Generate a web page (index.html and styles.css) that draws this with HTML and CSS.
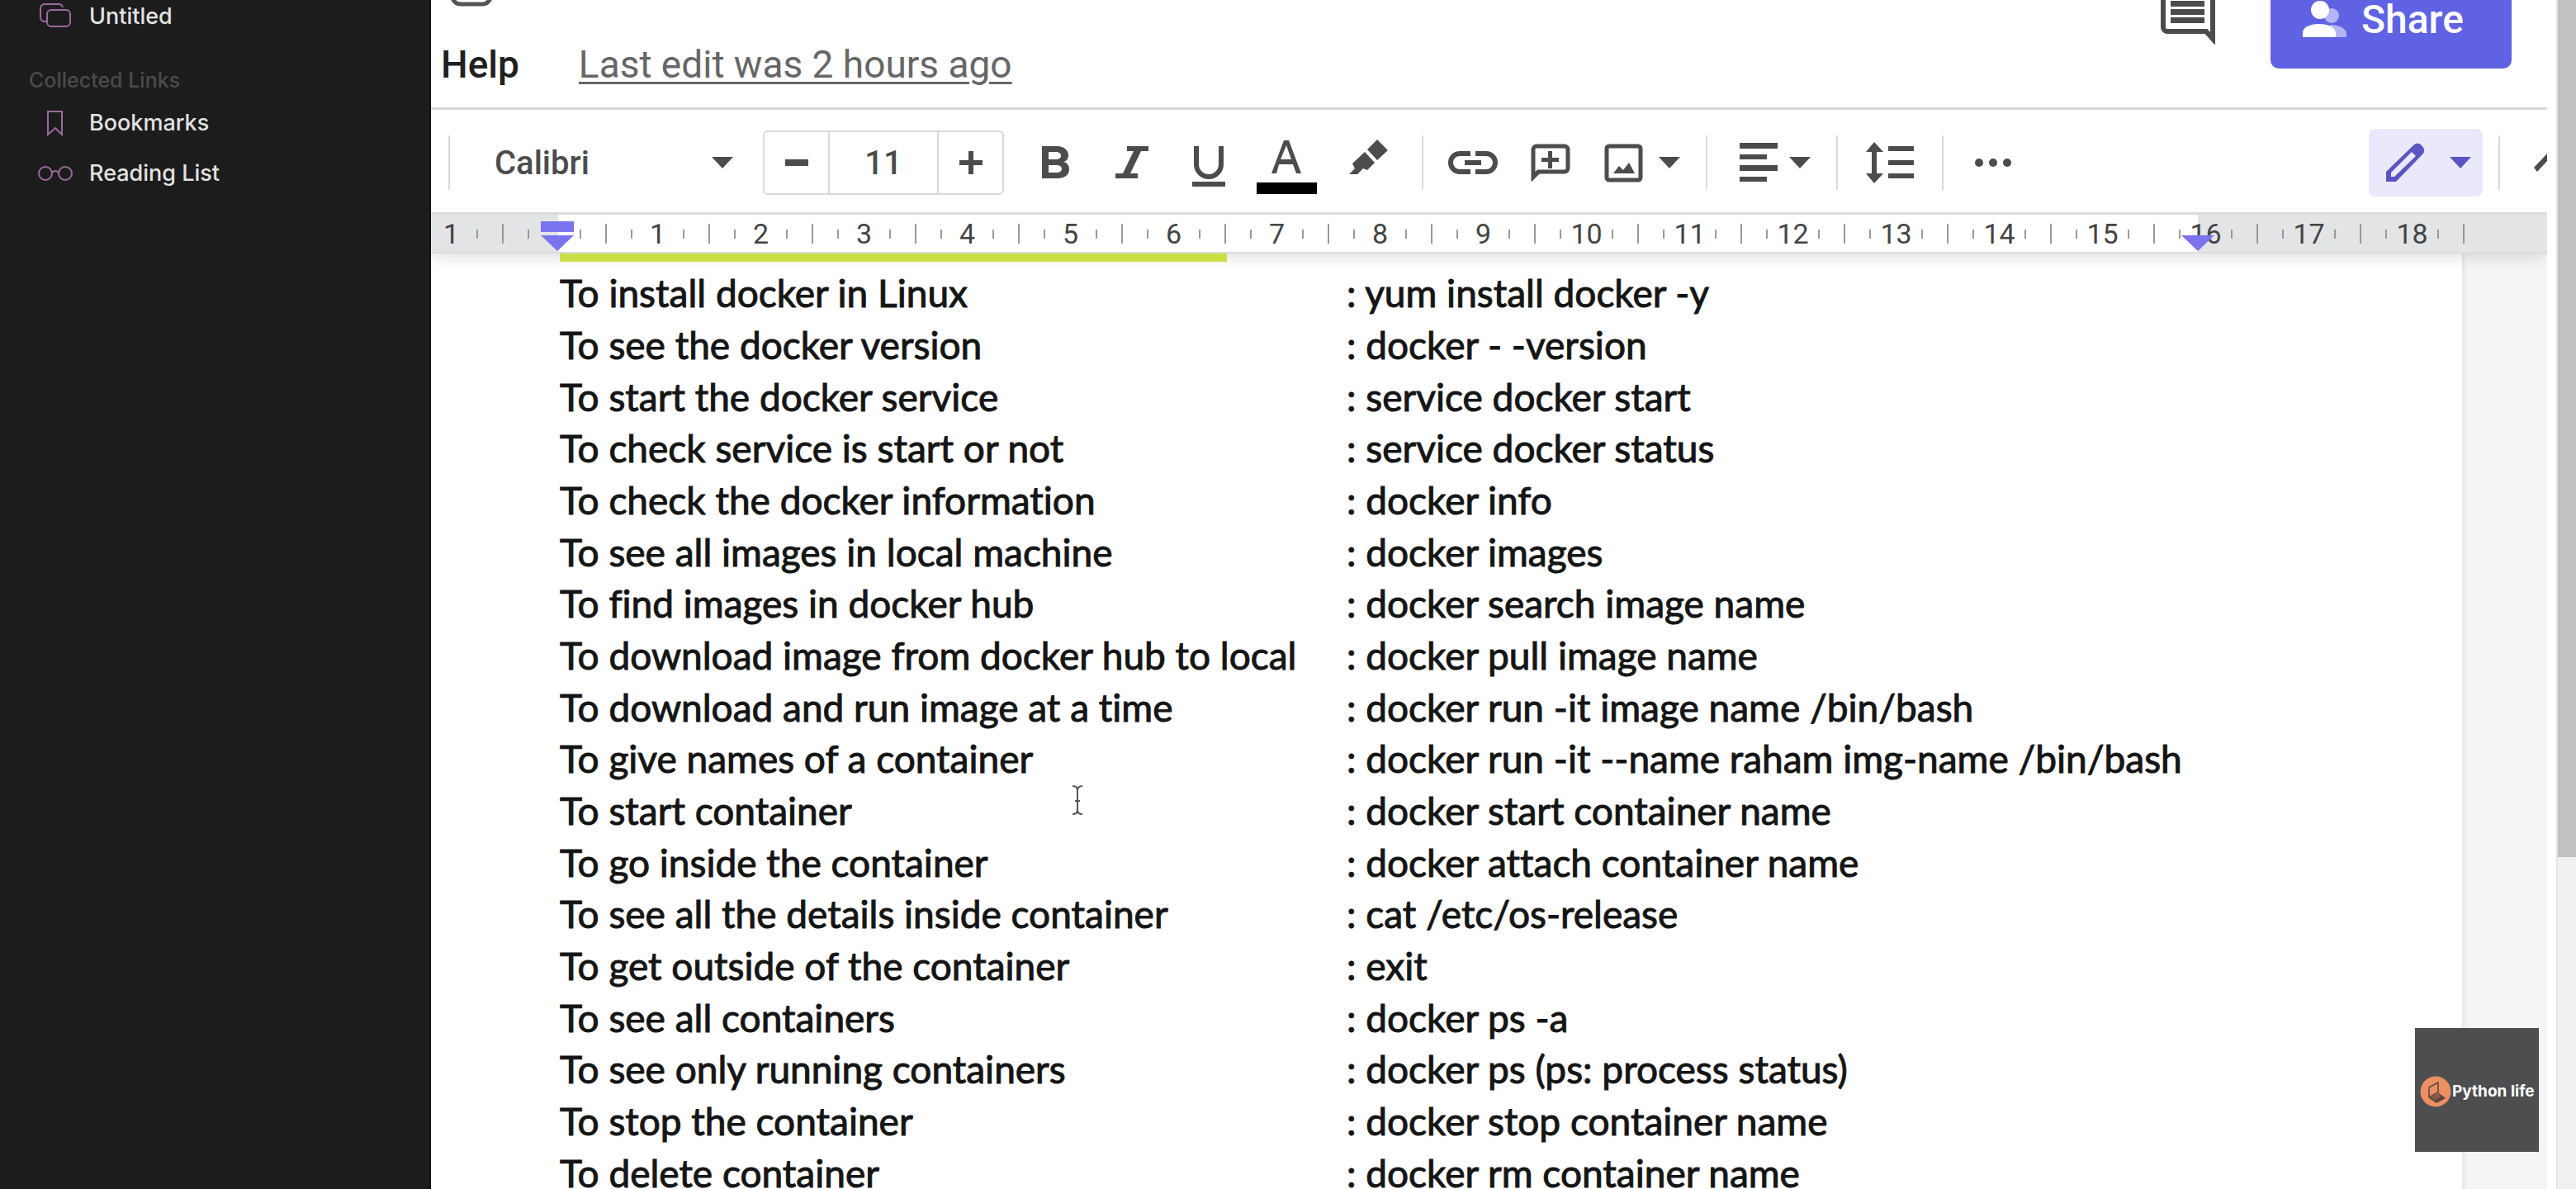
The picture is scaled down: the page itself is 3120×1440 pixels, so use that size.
FILE: index.html
```html
<!DOCTYPE html>
<html lang="en">
<head>
<meta charset="utf-8">
<title>Docker commands</title>
<link rel="stylesheet" href="styles.css">
</head>
<body>
<div class="app">
  <aside class="sidebar">
    <a class="side-link" href="#untitled">
      <svg class="side-icon" viewBox="0 0 44 36" aria-hidden="true"><path d="M11 25H9a5 5 0 0 1-5-5V9a5 5 0 0 1 5-5h17a5 5 0 0 1 5 4"/><rect x="12" y="11" width="28" height="20" rx="5"/></svg>
      Untitled
    </a>
    <h2 class="side-title">Collected Links</h2>
    <a class="side-link" href="#bookmarks">
      <svg class="side-icon" viewBox="0 0 44 36" aria-hidden="true"><path d="M13 4h17v28l-8-8-9 8z"/></svg>
      Bookmarks
    </a>
    <a class="side-link" href="#reading">
      <svg class="side-icon" viewBox="0 0 44 36" aria-hidden="true"><circle cx="10" cy="18" r="8"/><circle cx="34" cy="18" r="8"/><path d="M18 17q4-4 8 0"/></svg>
      Reading List
    </a>
  </aside>

  <main class="editor">
    <header class="header">
      <div class="header-left">
        <svg class="drive-icon" viewBox="0 0 54 8" aria-hidden="true"><path d="M3 -6Q5 5 14 5H40Q49 5 51 -6"/></svg>
        <nav class="menu">
          <button class="menu-item" type="button">Help</button>
          <a class="last-edit" href="#history">Last edit was 2 hours ago</a>
        </nav>
      </div>
      <div class="header-right">
        <button class="comments" type="button" aria-label="Comments">
          <svg width="68" height="54" viewBox="0 0 68 54" aria-hidden="true"><path d="M4-8V33a5 5 0 0 0 5 5H56l8 9V-8" fill="none" stroke="#4c4c4c" stroke-width="6"/><path d="M53 39h14v14z" fill="#4c4c4c"/><path d="M13 4.500h41M13 14.500h41M13 24.500h41" stroke="#4c4c4c" stroke-width="7"/></svg>
        </button>
        <button class="share" type="button">
          <svg width="56" height="46" viewBox="0 0 56 46" aria-hidden="true"><circle cx="36" cy="18" r="9" fill="#b4b5f4"/><path d="M34 29c12 0 20 5 20 11v4H34z" fill="#b4b5f4"/><circle cx="22" cy="11" r="11" fill="#fff"/><path d="M1 44v-5c0-7 9-11 20-11s20 4 20 11v5z" fill="#fff"/></svg>
          Share
        </button>
      </div>
    </header>

    <div class="toolbar">
      <span class="sep"></span>
      <div class="font-pick">
        <select class="font-select" aria-label="Font"><option>Calibri</option></select>
        <svg class="arrow" viewBox="0 0 26 14" aria-hidden="true"><path d="M0 0h26L13 14z"/></svg>
      </div>
      <div class="size-box">
        <button type="button" aria-label="Decrease font size"><svg width="28" height="28" viewBox="0 0 28 28" aria-hidden="true"><path d="M0 10h28v8H0z"/></svg></button>
        <input type="text" value="11" aria-label="Font size">
        <button type="button" aria-label="Increase font size"><svg width="28" height="28" viewBox="0 0 28 28" aria-hidden="true"><path d="M0 11h11V0h6v11h11v6H17v11h-6V17H0z"/></svg></button>
      </div>
      <div class="group styles">
        <button type="button" aria-label="Bold"><svg width="74" height="68" viewBox="0 0 74 68" aria-hidden="true"><path fill-rule="evenodd" d="M21 14H39C48 14 53 19 53 25C53 29 51 32 47 33C52 34 54 38 54 42C54 49 48 53 40 53H21zM29 21V30H38C46 30 46 21 38 21zM29 37V46H39C47 46 47 37 39 37z"/></svg></button>
        <button type="button" aria-label="Italic"><svg width="74" height="68" viewBox="0 0 74 68" aria-hidden="true"><path d="M31 14H57V20H48L35 47H44V53H17V47H26L39 20H31z"/></svg></button>
        <button type="button" aria-label="Underline"><svg width="74" height="68" viewBox="0 0 74 68" aria-hidden="true"><path d="M22 14V36a15 15 0 0 0 30 0V14" fill="none" stroke="#4c4c4c" stroke-width="6"/><path d="M17 57h40v6H17z"/></svg></button>
        <button type="button" aria-label="Text color"><svg width="96" height="80" viewBox="0 0 96 80" aria-hidden="true"><path fill-rule="evenodd" d="M45 13H51L66 53H60L56 42H39L36 53H30zM41 36H54L48 19z"/><path d="M12 64h73v14H12z" fill="#000"/></svg></button>
        <button type="button" aria-label="Highlight color"><svg width="74" height="68" viewBox="0 0 74 68" aria-hidden="true"><path d="M53 6L66 19L53 31L41 18zM38 21L50 34L41 43L36 41L29 48H19L26 41L23 35z"/></svg></button>
      </div>
      <span class="sep"></span>
      <div class="group insert">
        <button type="button" aria-label="Insert link"><svg width="60" height="28" viewBox="0 0 60 28" aria-hidden="true"><path d="M27 3H14a11 11 0 0 0 0 22H27M33 3H46a11 11 0 0 1 0 22H33M20 14H40" fill="none" stroke="#4c4c4c" stroke-width="6"/></svg></button>
        <button type="button" aria-label="Add comment"><svg width="48" height="46" viewBox="0 0 48 46" aria-hidden="true"><path d="M3 40V7a4 4 0 0 1 4-4H41a4 4 0 0 1 4 4V30a4 4 0 0 1-4 4H9z" fill="none" stroke="#4c4c4c" stroke-width="5"/><path d="M1 34h12L1 46zM21 9h5v8h8v5h-8v8h-5v-8h-8v-5h8z"/></svg></button>
        <button class="with-arrow" type="button" aria-label="Insert image"><svg width="48" height="48" viewBox="0 0 48 48" aria-hidden="true"><rect x="4" y="4" width="41" height="41" rx="3" fill="none" stroke="#4c4c4c" stroke-width="5"/><path d="M12 37l7-9 5 5 7-9 7 13z"/></svg><svg class="arrow" viewBox="0 0 26 14" aria-hidden="true"><path d="M0 0h26L13 14z"/></svg></button>
      </div>
      <span class="sep"></span>
      <button class="with-arrow align" type="button" aria-label="Align"><svg width="46" height="48" viewBox="0 0 46 48" aria-hidden="true"><path d="M0 0h46v7H0zM0 14h33v6H0zM0 27h46v7H0zM0 41h33v6H0z"/></svg><svg class="arrow" viewBox="0 0 26 14" aria-hidden="true"><path d="M0 0h26L13 14z"/></svg></button>
      <span class="sep"></span>
      <button class="spacing" type="button" aria-label="Line spacing"><svg width="58" height="50" viewBox="0 0 58 50" aria-hidden="true"><path d="M10 0L21 12H13V38H21L10 50L0 38H7V12H0zM27 5h31v6H27zM27 22h31v6H27zM27 38h31v6H27z"/></svg></button>
      <span class="sep"></span>
      <button class="more" type="button" aria-label="More"><svg width="44" height="12" viewBox="0 0 44 12" aria-hidden="true"><circle cx="5" cy="6" r="5"/><circle cx="22" cy="6" r="5"/><circle cx="39" cy="6" r="5"/></svg></button>
      <button class="mode" type="button" aria-label="Editing mode"><svg width="48" height="48" viewBox="0 0 48 48" aria-hidden="true"><path fill-rule="evenodd" d="M1 47V35L34 3Q39-2 44 3Q50 9 45 14L13 47zM7 41H11L37 16L32 11L7 36z"/></svg><svg class="arrow" viewBox="0 0 26 14" aria-hidden="true"><path d="M0 0h26L13 14z"/></svg></button>
      <span class="sep"></span>
      <button class="collapse" type="button" aria-label="Hide menus"><svg width="16" height="22" viewBox="0 0 16 22" aria-hidden="true"><path d="M0 17L16 0V9L4 22z"/></svg></button>
    </div>

    <div class="ruler" id="ruler">
      <svg class="marker-left" viewBox="0 0 40 36" aria-hidden="true"><path d="M0 0h40v13H0zM0 17h40L20 36z"/></svg>
      <svg class="marker-right" viewBox="0 0 40 36" aria-hidden="true"><path d="M0 17h40L20 36z"/></svg>
    </div>

    <section class="canvas">
      <article class="page">
        <div class="title-line"></div>
        <table class="commands">
          <tbody>
            <tr><td>To install docker in Linux</td><td>: yum install docker -y</td></tr>
            <tr><td>To see the docker version</td><td>: docker - -version</td></tr>
            <tr><td>To start the docker service</td><td>: service docker start</td></tr>
            <tr><td>To check service is start or not</td><td>: service docker status</td></tr>
            <tr><td>To check the docker information</td><td>: docker info</td></tr>
            <tr><td>To see all images in local machine</td><td>: docker images</td></tr>
            <tr><td>To find images in docker hub</td><td>: docker search image name</td></tr>
            <tr><td>To download image from docker hub to local</td><td>: docker pull image name</td></tr>
            <tr><td>To download and run image at a time</td><td>: docker run -it image name /bin/bash</td></tr>
            <tr><td>To give names of a container</td><td>: docker run -it --name raham img-name /bin/bash</td></tr>
            <tr><td>To start container</td><td>: docker start container name</td></tr>
            <tr><td>To go inside the container</td><td>: docker attach container name</td></tr>
            <tr><td>To see all the details inside container</td><td>: cat /etc/os-release</td></tr>
            <tr><td>To get outside of the container</td><td>: exit</td></tr>
            <tr><td>To see all containers</td><td>: docker ps -a</td></tr>
            <tr><td>To see only running containers</td><td>: docker ps (ps: process status)</td></tr>
            <tr><td>To stop the container</td><td>: docker stop container name</td></tr>
            <tr><td>To delete container</td><td>: docker rm container name</td></tr>
          </tbody>
        </table>
        <svg class="cursor" viewBox="0 0 14 38" aria-hidden="true"><path d="M1 2q6 0 6 5q0-5 6-5M7 6v26M1 36q6 0 6-5q0 5 6 5M4 20h6"/></svg>
      </article>
    </section>
  </main>

  <div class="scrollbar"><div class="thumb"></div></div>

  <div class="badge">
    <svg width="38" height="38" viewBox="0 0 38 38" aria-hidden="true"><circle cx="19" cy="19" r="18.500" fill="#ec8f63"/><path d="M11 26V14L22 8V20z" fill="none" stroke="#5a4540" stroke-width="1.500"/><path d="M11 27L23 21L31 27L20 33z" fill="#5a4540"/><path d="M14 26l8-4 4 3-8 4z" fill="#8a5c4c"/></svg>
    <span>Python life</span>
  </div>
</div>
<script src="ruler.js"></script>
</body>
</html>
```
FILE: styles.css
```css
* { box-sizing: border-box; }
body { margin: 0; font-family: Roboto, "Liberation Sans", sans-serif; background: #fff; }
button { border: 0; padding: 0; background: none; font: inherit; color: inherit; display: flex; align-items: center; }
svg { display: block; flex: none; overflow: hidden; }

.app { position: relative; display: grid; grid-template-columns: 522px minmax(0, 1fr) 24px; height: 100vh; overflow: hidden; }

/* Sidebar */
.sidebar { background: #1c1c1c; border-right: 2px solid #111; font-family: Inter, sans-serif; }
.side-link { display: flex; align-items: center; gap: 19px; height: 61px; padding-left: 45px; color: #e2e2e2; font-size: 27px; font-weight: 500; text-decoration: none; }
.side-link:first-child { height: 38px; }
.side-icon { width: 44px; height: 36px; fill: none; stroke: #9a6a9c; stroke-width: 2px; }
.side-title { margin: 40px 0 0; padding-left: 35px; height: 40px; line-height: 38px; font-size: 25px; font-weight: 500; color: #4b4b4b; }

/* Header */
.editor { display: flex; flex-direction: column; min-width: 0; padding-right: 11px; }
.header { display: flex; justify-content: space-between; height: 133px; flex: none; border-bottom: 3px solid #d9d9d9; }
.drive-icon { width: 54px; height: 8px; margin-left: 22px; fill: none; stroke: #555; stroke-width: 5px; }
.menu { display: flex; align-items: center; gap: 72px; height: 140px; padding-left: 12px; font-size: 46px; color: #202020; }
.menu-item { font-weight: 500; }
.last-edit { color: #666; text-decoration-thickness: 3px; text-underline-offset: 5px; }
.header-right { display: flex; align-items: flex-start; gap: 66px; padding-right: 43px; }
.share { gap: 16px; width: 292px; height: 83px; padding: 0 0 35px 38px; border-radius: 0 0 10px 10px; background: #5f62e2; color: #fff; font-size: 48px; font-weight: 500; line-height: 44px; }

/* Toolbar */
.toolbar { display: flex; align-items: center; flex: none; height: 127px; padding: 4px 0 0 21px; border-bottom: 3px solid #dcdcdc; color: #4c4c4c; font-size: 40px; font-weight: 500; overflow: hidden; }
.toolbar svg { fill: #4c4c4c; }
.toolbar .arrow { width: 26px; height: 14px; }
.sep { width: 2px; height: 66px; background: #dadada; flex: none; }
.font-pick { display: flex; align-items: center; justify-content: space-between; width: 379px; padding: 0 36px 0 54px; }
.font-select { appearance: none; border: 0; padding: 0; background: none; color: inherit; font: inherit; flex: 1; }
.size-box { display: flex; width: 292px; height: 78px; border: 2px solid #dadada; border-radius: 6px; }
.size-box button { flex: 1; justify-content: center; }
.size-box input { width: 134px; border: 0; border-left: 2px solid #dadada; border-right: 2px solid #dadada; padding: 0; background: none; font: inherit; color: inherit; text-align: center; }
.group { display: flex; align-items: center; }
.styles { width: 506px; padding-left: 25px; gap: 19px; }
.styles button:nth-child(4) { margin: 0 -10px; }
.insert { padding: 0 31px 0 30px; gap: 40px; }
.insert .with-arrow { gap: 19px; }
.align { gap: 14px; padding: 0 31px 0 39px; }
.spacing { padding: 0 34px; }
.more { padding-left: 38px; margin-right: auto; }
.mode { gap: 30px; width: 138px; height: 82px; padding-left: 20px; margin-right: 19px; border-radius: 8px; background: #e9e9fb; }
.toolbar .mode svg { fill: #5a55c0; }
.collapse { margin-left: 41px; }

/* Ruler */
.ruler { position: relative; z-index: 1; display: flex; flex: none; height: 47px; padding: 1px 0 0 9px; border-bottom: 2px solid #dcdcdc; background: linear-gradient(90deg, #e3e4e6 154px, #fff 154px, #fff 2140px, #e3e4e6 2140px); box-shadow: 0 4px 20px #00000022; color: #444; font-size: 34px; clip-path: inset(0 0 -30px 0); }
.unit { display: grid; grid-template-columns: repeat(4, 1fr); align-items: center; justify-items: center; width: 125px; flex: none; }
.unit .num { display: flex; justify-content: center; width: 10px; }
.tick { width: 2px; height: 11px; background: #999; }
.tick.half { height: 24px; }
.marker-left, .marker-right { position: absolute; top: 8px; width: 40px; height: 36px; fill: #7b74ee; }
.marker-left { left: 133px; }
.marker-right { left: 2120px; }

/* Document */
.canvas { flex: 1; background: #f5f5f8; padding-right: 103px; overflow: hidden; }
.page { position: relative; background: #fff; min-height: 100%; padding-left: 156px; box-shadow: 0 0 8px #00000022; }
.title-line { position: relative; z-index: 2; width: 808px; height: 10px; background: #cbdd45; }
.commands { width: 100%; height: 1128px; margin-top: 7px; border-collapse: collapse; table-layout: fixed; color: #151515; font-family: Lato, Carlito, sans-serif; font-size: 46px; line-height: 50px; font-variant-ligatures: none; -webkit-text-stroke: 1px #151515; white-space: nowrap; }
.commands td { padding: 0; }
.commands td:first-child { width: 953px; }
.cursor { position: absolute; left: 776px; top: 643px; width: 14px; height: 38px; fill: none; stroke: #555; stroke-width: 2px; }

/* Scrollbar */
.scrollbar { background: #f0f0f2; border-left: 2px solid #e4e4e4; }
.thumb { height: 1038px; background: #c1c1c4; }

/* Channel badge */
.badge { position: absolute; right: 45px; bottom: 45px; display: flex; align-items: center; width: 150px; height: 150px; padding: 4px 0 0 6px; gap: 1px; background: #4d4e50; color: #fff; font: 700 19px/24px Inter, sans-serif; white-space: nowrap; z-index: 3; }
```
FILE: ruler.js
```js
// Builds one centimetre per unit: label, quarter tick, half tick, quarter tick.
const ruler = document.getElementById("ruler");
const labels = ["1", "", ...Array.from({ length: 18 }, (_, i) => String(i + 1))];
labels.forEach((label, i) => {
  const unit = document.createElement("div");
  unit.className = "unit";
  const last = i === labels.length - 1;
  unit.innerHTML =
    `<span class="num">${label}</span><span class="tick"></span><span class="tick half"></span>` +
    (last ? "" : `<span class="tick"></span>`);
  ruler.appendChild(unit);
});
```
